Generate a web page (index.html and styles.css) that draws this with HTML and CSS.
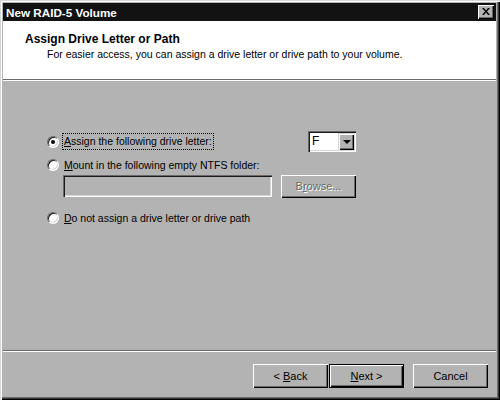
FILE: index.html
```html
<!DOCTYPE html>
<html>
<head>
<meta charset="utf-8">
<link rel="stylesheet" href="styles.css">
</head>
<body>
<div class="window">
  <div class="titlebar">
    <span class="title">New RAID-5 Volume</span>
    <span class="close">
      <svg width="8" height="7" viewBox="0 0 8 7"><path d="M0 0h2l2 2.5 2-2.5h2L5 3.5 8 7H6L4 4.5 2 7H0l3-3.5z" fill="#000"/></svg>
    </span>
  </div>
  <div class="header">
    <div class="heading">Assign Drive Letter or Path</div>
    <div class="subtitle">For easier access, you can assign a drive letter or drive path to your volume.</div>
  </div>
  <div class="sep"></div>
  <div class="body">
    <div class="row row1">
      <span class="radio checked"></span>
      <span class="label focus"><u>A</u>ssign the following drive letter:</span>
      <span class="spacer"></span>
      <span class="combo">
        <span class="combo-field">F</span>
        <span class="combo-btn"><span class="arrow"></span></span>
      </span>
    </div>
    <div class="row row2">
      <span class="radio"></span>
      <span class="label"><u>M</u>ount in the following empty NTFS folder:</span>
    </div>
    <div class="row row2b">
      <span class="textbox"></span>
      <span class="btn browse disabled"><span>B<u>r</u>owse...</span></span>
    </div>
    <div class="row row3">
      <span class="radio"></span>
      <span class="label"><u>D</u>o not assign a drive letter or drive path</span>
    </div>
  </div>
  <div class="sep"></div>
  <div class="footer">
    <span class="btn"><span>&lt; <u>B</u>ack</span></span>
    <span class="btn default"><span><u>N</u>ext &gt;</span></span>
    <span class="btn cancel"><span>Cancel</span></span>
  </div>
</div>
</body>
</html>
```
FILE: styles.css
```css
html, body {
  margin: 0;
  padding: 0;
  background: #b3b3b3;
}
.window {
  width: 500px;
  height: 400px;
  box-sizing: border-box;
  padding: 3px 4px 4px 3px;
  background: #b3b3b3;
  box-shadow: inset 1px 1px #d6d6d6, inset 2px 2px #ffffff, inset -1px -1px #000000, inset -2px -2px #3a3a3a, inset -3px -3px #6a6a6a;
  display: flex;
  flex-direction: column;
  font-family: "Liberation Sans", Arial, sans-serif;
  font-size: 10.5px;
  color: #000;
}
.titlebar {
  height: 18px;
  flex: none;
  background: #121212;
  display: flex;
  align-items: center;
  padding: 0 2px 0 3px;
}
.title {
  color: #fff;
  font-weight: bold;
  font-size: 11.7px;
  flex: 1;
}
.close {
  width: 16px;
  height: 14px;
  box-sizing: border-box;
  background: #b3b3b3;
  box-shadow: inset 1px 1px #fff, inset -1px -1px #000, inset -2px -2px #6a6a6a;
  display: flex;
  align-items: center;
  justify-content: center;
  padding-bottom: 1px;
}
.header {
  height: 58px;
  flex: none;
  background: #fff;
  box-sizing: border-box;
  padding: 11px 0 0 22px;
}
.heading {
  font-weight: bold;
  font-size: 12px;
  line-height: 14px;
}
.subtitle {
  padding-left: 22px;
  line-height: 14px;
  margin-top: 1px;
}
.sep {
  height: 2px;
  flex: none;
  box-sizing: border-box;
  border-top: 1px solid #6a6a6a;
  border-bottom: 1px solid #fff;
}
.body {
  flex: 1;
  padding: 50px 0 0 44px;
}
.row {
  display: flex;
  align-items: center;
  width: 309px;
}
.row1 { height: 21px; }
.row2 { height: 20px; margin-top: 3px; }
.row2b { height: 22px; padding-left: 16px; width: 293px; justify-content: space-between; }
.row3 { height: 16px; margin-top: 13px; }
.radio {
  width: 12px;
  height: 12px;
  box-sizing: border-box;
  border-radius: 50%;
  background: #fff;
  border: 1px solid;
  border-color: #6a6a6a #fff #fff #6a6a6a;
  box-shadow: inset 1px 1px #1a1a1a, inset -1px -1px #d6d6d6;
  position: relative;
  margin-right: 4px;
  flex: none;
}
.radio.checked::after {
  content: "";
  position: absolute;
  left: 3px;
  top: 3px;
  width: 4px;
  height: 4px;
  border-radius: 50%;
  background: #000;
}
.label {
  padding: 1px 1px;
  line-height: 13px;
}
.focus {
  outline: 1px dotted #000;
  outline-offset: 0;
}
.spacer { flex: 1; }
.combo {
  width: 48px;
  height: 21px;
  box-sizing: border-box;
  display: flex;
  background: #fff;
  padding: 2px;
  box-shadow: inset 1px 1px #6a6a6a, inset 2px 2px #1a1a1a, inset -1px -1px #fff, inset -2px -2px #d6d6d6;
}
.combo-field {
  flex: 1;
  padding-left: 2px;
  line-height: 17px;
  font-size: 12px;
}
.combo-btn {
  width: 16px;
  height: 17px;
  box-sizing: border-box;
  background: #b3b3b3;
  box-shadow: inset 1px 1px #d6d6d6, inset 2px 2px #fff, inset -1px -1px #000, inset -2px -2px #6a6a6a;
  display: flex;
  align-items: center;
  justify-content: center;
}
.arrow {
  width: 0;
  height: 0;
  border-left: 4px solid transparent;
  border-right: 4px solid transparent;
  border-top: 4px solid #000;
  margin-left: 1px;
}
.textbox {
  width: 209px;
  height: 22px;
  box-sizing: border-box;
  background: #b3b3b3;
  box-shadow: inset 1px 1px #6a6a6a, inset 2px 2px #1a1a1a, inset -1px -1px #fff, inset -2px -2px #d6d6d6;
}
.btn {
  width: 75px;
  height: 23px;
  box-sizing: border-box;
  display: flex;
  align-items: center;
  justify-content: center;
  background: #b3b3b3;
  box-shadow: inset 1px 1px #fff, inset -1px -1px #000, inset -2px -2px #6a6a6a;
  font-size: 11px;
  white-space: pre;
}
.disabled {
  color: #6a6a6a;
  text-shadow: 1px 1px #fff;
}
.footer {
  height: 44px;
  flex: none;
  box-sizing: border-box;
  display: flex;
  align-items: flex-start;
  justify-content: flex-end;
  padding: 12px 8px 0 0;
  gap: 1px;
}
.footer .btn { height: 24px; }
.btn.default {
  border: 1px solid #000;
}
.btn.cancel { margin-left: 8px; }
u { text-decoration-thickness: 1px; text-underline-offset: 1px; }
```
